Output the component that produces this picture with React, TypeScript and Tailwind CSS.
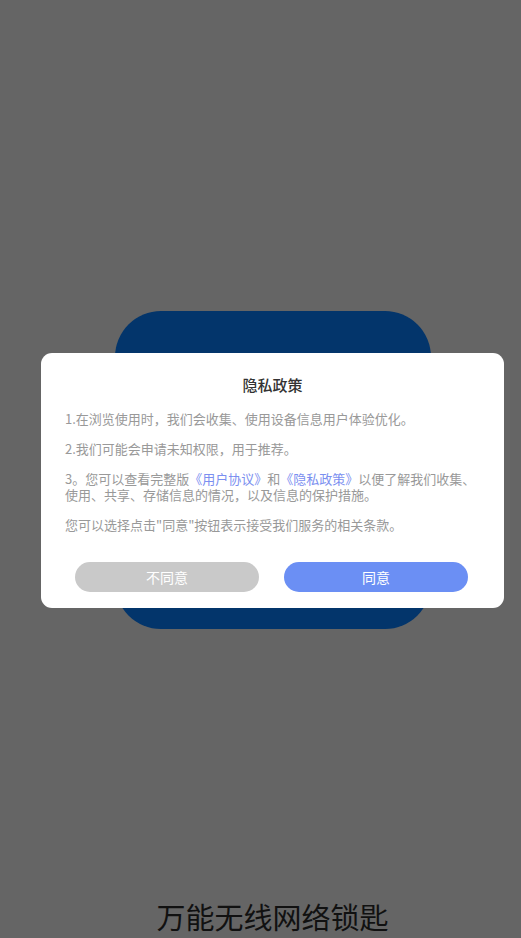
export default function App() {
  return (
    <div
      className="relative w-[521px] h-[938px] overflow-hidden bg-[#656565] flex flex-col"
      style={{ fontFamily: '"Noto Sans CJK SC", "Noto Sans", sans-serif' }}
    >
      {/* page behind the mask */}
      <div className="mt-[311px] ml-[115px] w-[316px] h-[318px] rounded-[46px] bg-[#03356b]" />
      <div className="mt-auto mb-[3px] pl-[24px] text-center text-[29px] leading-[38px] text-[#111111]">
        万能无线网络锁匙
      </div>

      {/* privacy dialog */}
      <div className="absolute left-[41px] top-[353px] w-[463px] h-[255px] rounded-[11px] bg-white px-[24px] pt-[20px]">
        <div className="text-center text-[15px] leading-[24px] font-medium text-[#333333]">隐私政策</div>
        <div className="mt-[14px] flex flex-col gap-[14px] text-[13px] leading-[16px] text-[#999999]">
          <p>1.在浏览使用时，我们会收集、使用设备信息用户体验优化。</p>
          <p>2.我们可能会申请未知权限，用于推荐。</p>
          <p>
            3。您可以查看完整版<span className="inline-block text-[#7b8ff0]">《用户协议》</span>和<span className="inline-block text-[#7b8ff0]">《隐私政策》</span>以便了解我们收集、使用、共享、存储信息的情况，以及信息的保护措施。
          </p>
          <p>您可以选择点击"同意"按钮表示接受我们服务的相关条款。</p>
        </div>
        <div className="mt-[29px] flex gap-[25px] px-[10px]">
          <button className="w-[184px] h-[30px] rounded-full bg-[#c9c9c9] text-white text-[14px]">不同意</button>
          <button className="w-[184px] h-[30px] rounded-full bg-[#6b8ff4] text-white text-[14px]">同意</button>
        </div>
      </div>
    </div>
  );
}
